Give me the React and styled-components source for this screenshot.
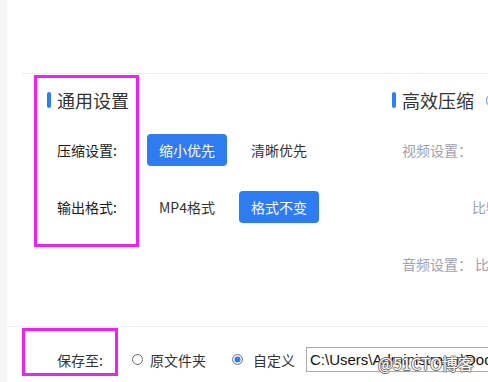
import React from "react";
import styled, { createGlobalStyle } from "styled-components";

const GlobalStyle = createGlobalStyle`
  html, body {
    margin: 0;
    padding: 0;
    background: #fff;
    font-family: "Noto Sans CJK SC", "Noto Sans", sans-serif;
  }
`;

const Page = styled.div`
  position: relative;
  display: flex;
  width: 488px;
  height: 382px;
  overflow: hidden;
`;

const Rail = styled.div`
  width: 7px;
  flex-shrink: 0;
  background: #f6f6f6;
`;

const Main = styled.div`
  flex: 1;
  min-width: 0;
  display: flex;
  flex-direction: column;
`;

const Header = styled.div`
  height: 73px;
  flex-shrink: 0;
  margin-left: 15px;
  border-bottom: 1px solid #ececec;
`;

const Body = styled.div`
  flex: 1;
  display: flex;
  padding: 14px 0 0 40px;
`;

const Column = styled.div`
  width: ${(p) => p.$width || "auto"};
  flex-shrink: 0;
  display: flex;
  flex-direction: column;
`;

const SectionTitle = styled.div`
  display: flex;
  align-items: center;
  height: 24px;
  font-size: 18px;
  line-height: 24px;
  color: #333;
  white-space: nowrap;
`;

const Bar = styled.span`
  width: 4px;
  height: 16px;
  border-radius: 2px;
  background: #2f7cf6;
  margin-right: 6px;
`;

const HelpIcon = styled.span`
  width: 13px;
  height: 13px;
  margin-left: 12px;
  border: 1px solid #5b8ff0;
  border-radius: 50%;
  flex-shrink: 0;
`;

const Rows = styled.div`
  display: flex;
  flex-direction: column;
  gap: 25px;
  margin-top: 22px;
`;

const Row = styled.div`
  display: flex;
  align-items: center;
  height: 32px;
  padding-left: ${(p) => p.$indent || "10px"};
  white-space: nowrap;
`;

const Label = styled.span`
  width: 90px;
  font-size: 14px;
  color: #1a1a1a;
`;

const MutedText = styled.span`
  font-size: 14px;
  color: #a0a0b3;
  margin-right: ${(p) => p.$gap || "0"};
`;

const Options = styled.div`
  display: flex;
  gap: 12px;
`;

const OptionButton = styled.div`
  width: 80px;
  height: 32px;
  border-radius: 4px;
  display: flex;
  align-items: center;
  justify-content: center;
  font-size: 14px;
  background: ${(p) => (p.$active ? "#2f7bf2" : "transparent")};
  color: ${(p) => (p.$active ? "#fff" : "#333")};
`;

const Footer = styled.div`
  height: 56px;
  flex-shrink: 0;
  border-top: 1px solid #f0f0f0;
  display: flex;
  align-items: center;
  padding: 10px 0 0 50px;
  box-sizing: border-box;
  white-space: nowrap;
`;

const FooterLabel = styled.span`
  width: 75px;
  flex-shrink: 0;
  font-size: 14px;
  color: #333;
`;

const RadioOption = styled.label`
  display: flex;
  align-items: center;
  gap: ${(p) => (p.$checked ? "10px" : "7px")};
  margin-right: ${(p) => p.$after || "26px"};
  font-size: 14px;
  color: #333;
  flex-shrink: 0;
`;

const RadioDot = styled.span`
  width: 11px;
  height: 11px;
  box-sizing: border-box;
  border-radius: 50%;
  border: 1px solid ${(p) => (p.$checked ? "#8a8a8a" : "#6d6d6d")};
  background: ${(p) => (p.$checked ? "#2b7ef6" : "#fff")};
  box-shadow: ${(p) => (p.$checked ? "inset 0 0 0 1.5px #fff" : "none")};
`;

const PathInput = styled.div`
  width: 200px;
  flex-shrink: 0;
  height: 25px;
  box-sizing: border-box;
  border: 1px solid #a9a9a9;
  padding-left: 3px;
  display: flex;
  align-items: center;
  font-family: "Liberation Sans", Arial, sans-serif;
  font-size: 15px;
  color: #111;
  overflow: hidden;
`;

const Watermark = styled.div`
  position: absolute;
  left: 378px;
  top: 353px;
  font-size: 16px;
  line-height: 20px;
  color: #fff;
  text-shadow: 1px 0 0 #6f6f6f, -1px 0 0 #6f6f6f, 0 1px 0 #6f6f6f,
    0 -1px 0 #6f6f6f;
  white-space: nowrap;
`;

const Annotation = styled.div`
  position: absolute;
  left: ${(p) => p.$x}px;
  top: ${(p) => p.$y}px;
  width: ${(p) => p.$w}px;
  height: ${(p) => p.$h}px;
  box-sizing: border-box;
  border: 3px solid #f21ff2;
  pointer-events: none;
`;

export default function App() {
  return (
    <>
      <GlobalStyle />
      <Page>
        <Rail />
        <Main>
          <Header />
          <Body>
            <Column $width="345px">
              <SectionTitle>
                <Bar />
                通用设置
              </SectionTitle>
              <Rows>
                <Row>
                  <Label>压缩设置:</Label>
                  <Options>
                    <OptionButton $active>缩小优先</OptionButton>
                    <OptionButton>清晰优先</OptionButton>
                  </Options>
                </Row>
                <Row>
                  <Label>输出格式:</Label>
                  <Options>
                    <OptionButton>MP4格式</OptionButton>
                    <OptionButton $active>格式不变</OptionButton>
                  </Options>
                </Row>
              </Rows>
            </Column>
            <Column>
              <SectionTitle>
                <Bar />
                高效压缩
                <HelpIcon />
              </SectionTitle>
              <Rows>
                <Row>
                  <MutedText>视频设置：</MutedText>
                </Row>
                <Row $indent="80px">
                  <MutedText>比特率</MutedText>
                </Row>
                <Row>
                  <MutedText $gap="3px">音频设置：</MutedText>
                  <MutedText>比特率</MutedText>
                </Row>
              </Rows>
            </Column>
          </Body>
          <Footer>
            <FooterLabel>保存至:</FooterLabel>
            <RadioOption>
              <RadioDot />
              原文件夹
            </RadioOption>
            <RadioOption $checked $after="11px">
              <RadioDot $checked />
              自定义
            </RadioOption>
            <PathInput>C:\Users\Administrator\Documents</PathInput>
          </Footer>
        </Main>
        <Watermark>@51CTO博客</Watermark>
        <Annotation $x={34} $y={75} $w={105} $h={172} />
        <Annotation $x={22} $y={328} $w={96} $h={48} />
      </Page>
    </>
  );
}
